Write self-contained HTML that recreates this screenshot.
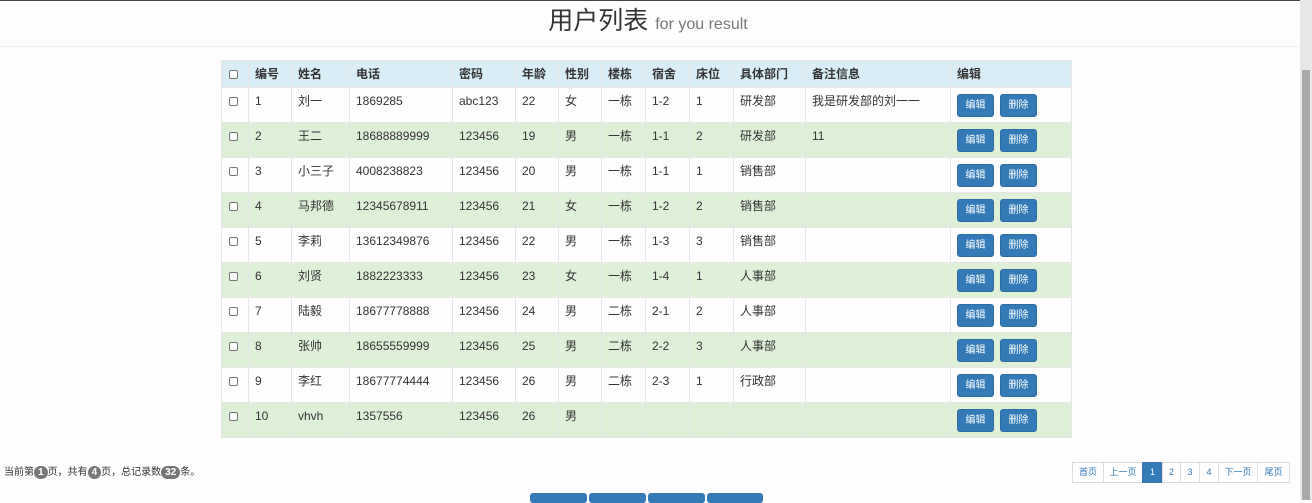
<!DOCTYPE html>
<html><head><meta charset="utf-8"><style>
*{margin:0;padding:0;box-sizing:border-box}
body{width:1312px;height:500px;overflow:hidden;background:#fefefe;font-family:"Liberation Sans","Noto Sans CJK SC",sans-serif;color:#333;position:relative}
.top{position:absolute;left:0;top:0;width:1312px;height:1px;background:#444}
.hdr{position:absolute;left:0;top:46px;width:1300px;height:1px;background:#eef0f6}
h1{position:absolute;top:5px;left:-2px;width:1300px;text-align:center;font-weight:normal;font-size:25px;line-height:32px;color:#333}
h1 small{font-size:16px;color:#777}
table{position:absolute;left:221px;top:60px;border-collapse:collapse;font-size:12px;table-layout:fixed;width:850px}
td,th{border:1px solid #e6e6e6;text-align:left;padding:0 0 0 6px;vertical-align:top;line-height:14px}
th{height:27px;background:#d9edf7;font-weight:bold;vertical-align:middle;font-size:12px}
td{height:35px;padding-top:6px}
tr.g td{background:#dff0d8}
.cb{display:inline-block;width:9px;height:9px;border:1px solid #777;border-radius:2px;background:#fff;margin-left:1px;vertical-align:middle}
.b{display:inline-block;width:37px;height:23px;background:#337ab7;border:1px solid #2e6da4;border-radius:3px;color:#fff;font-size:10px;text-align:center;line-height:21px;vertical-align:top}
.b+.b{margin-left:6px}
.info{position:absolute;left:4px;top:466px;font-size:10px;line-height:13px;color:#333}
.bd{display:inline-block;background:#777;color:#fff;border-radius:8px;padding:0 4px;font-weight:bold;line-height:13px}
.pg{position:absolute;left:1073px;top:462px;display:flex;font-size:9px}
.pg span{border:1px solid #ddd;margin-left:-1px;height:21px;line-height:19px;text-align:center;color:#337ab7;background:#fff}
.pg span.a{background:#337ab7;color:#fff;border-color:#337ab7}
.bb{position:absolute;top:493px;height:10px;width:57px;background:#337ab7;border-radius:3px}
.sb{position:absolute;left:1300px;top:0;width:12px;height:500px;background:#e8e8e8}
.th{position:absolute;left:1302px;top:70px;width:8px;height:430px;background:#a9a9a9}
</style></head><body>
<div class="top"></div>
<h1>用户列表 <small>for you result</small></h1>
<div class="hdr"></div>
<table>
<colgroup><col style="width:27px"><col style="width:43px"><col style="width:58px"><col style="width:103px"><col style="width:63px"><col style="width:43px"><col style="width:43px"><col style="width:44px"><col style="width:44px"><col style="width:44px"><col style="width:72px"><col style="width:145px"><col style="width:121px"></colgroup>
<tr><th><span class="cb"></span></th><th>编号</th><th>姓名</th><th>电话</th><th>密码</th><th>年龄</th><th>性别</th><th>楼栋</th><th>宿舍</th><th>床位</th><th>具体部门</th><th>备注信息</th><th>编辑</th></tr>
<tr><td><span class="cb"></span></td><td>1</td><td>刘一</td><td>1869285</td><td>abc123</td><td>22</td><td>女</td><td>一栋</td><td>1-2</td><td>1</td><td>研发部</td><td>我是研发部的刘一一</td><td><span class="b">编辑</span><span class="b">删除</span></td></tr>
<tr class="g"><td><span class="cb"></span></td><td>2</td><td>王二</td><td>18688889999</td><td>123456</td><td>19</td><td>男</td><td>一栋</td><td>1-1</td><td>2</td><td>研发部</td><td>11</td><td><span class="b">编辑</span><span class="b">删除</span></td></tr>
<tr><td><span class="cb"></span></td><td>3</td><td>小三子</td><td>4008238823</td><td>123456</td><td>20</td><td>男</td><td>一栋</td><td>1-1</td><td>1</td><td>销售部</td><td></td><td><span class="b">编辑</span><span class="b">删除</span></td></tr>
<tr class="g"><td><span class="cb"></span></td><td>4</td><td>马邦德</td><td>12345678911</td><td>123456</td><td>21</td><td>女</td><td>一栋</td><td>1-2</td><td>2</td><td>销售部</td><td></td><td><span class="b">编辑</span><span class="b">删除</span></td></tr>
<tr><td><span class="cb"></span></td><td>5</td><td>李莉</td><td>13612349876</td><td>123456</td><td>22</td><td>男</td><td>一栋</td><td>1-3</td><td>3</td><td>销售部</td><td></td><td><span class="b">编辑</span><span class="b">删除</span></td></tr>
<tr class="g"><td><span class="cb"></span></td><td>6</td><td>刘贤</td><td>1882223333</td><td>123456</td><td>23</td><td>女</td><td>一栋</td><td>1-4</td><td>1</td><td>人事部</td><td></td><td><span class="b">编辑</span><span class="b">删除</span></td></tr>
<tr><td><span class="cb"></span></td><td>7</td><td>陆毅</td><td>18677778888</td><td>123456</td><td>24</td><td>男</td><td>二栋</td><td>2-1</td><td>2</td><td>人事部</td><td></td><td><span class="b">编辑</span><span class="b">删除</span></td></tr>
<tr class="g"><td><span class="cb"></span></td><td>8</td><td>张帅</td><td>18655559999</td><td>123456</td><td>25</td><td>男</td><td>二栋</td><td>2-2</td><td>3</td><td>人事部</td><td></td><td><span class="b">编辑</span><span class="b">删除</span></td></tr>
<tr><td><span class="cb"></span></td><td>9</td><td>李红</td><td>18677774444</td><td>123456</td><td>26</td><td>男</td><td>二栋</td><td>2-3</td><td>1</td><td>行政部</td><td></td><td><span class="b">编辑</span><span class="b">删除</span></td></tr>
<tr class="g"><td><span class="cb"></span></td><td>10</td><td>vhvh</td><td>1357556</td><td>123456</td><td>26</td><td>男</td><td></td><td></td><td></td><td></td><td></td><td><span class="b">编辑</span><span class="b">删除</span></td></tr>
</table>
<div class="info">当前第<span class="bd">1</span>页，共有<span class="bd">4</span>页，总记录数<span class="bd">32</span>条。</div>
<div class="pg"><span style="width:32px">首页</span><span style="width:40px">上一页</span><span class="a" style="width:21px">1</span><span style="width:19px">2</span><span style="width:20px">3</span><span style="width:20px">4</span><span style="width:40px">下一页</span><span style="width:33px">尾页</span></div>
<div class="bb" style="left:530px"></div><div class="bb" style="left:589px"></div><div class="bb" style="left:648px"></div><div class="bb" style="left:707px;width:56px"></div>
<div class="sb"></div><div class="th"></div>
</body></html>
